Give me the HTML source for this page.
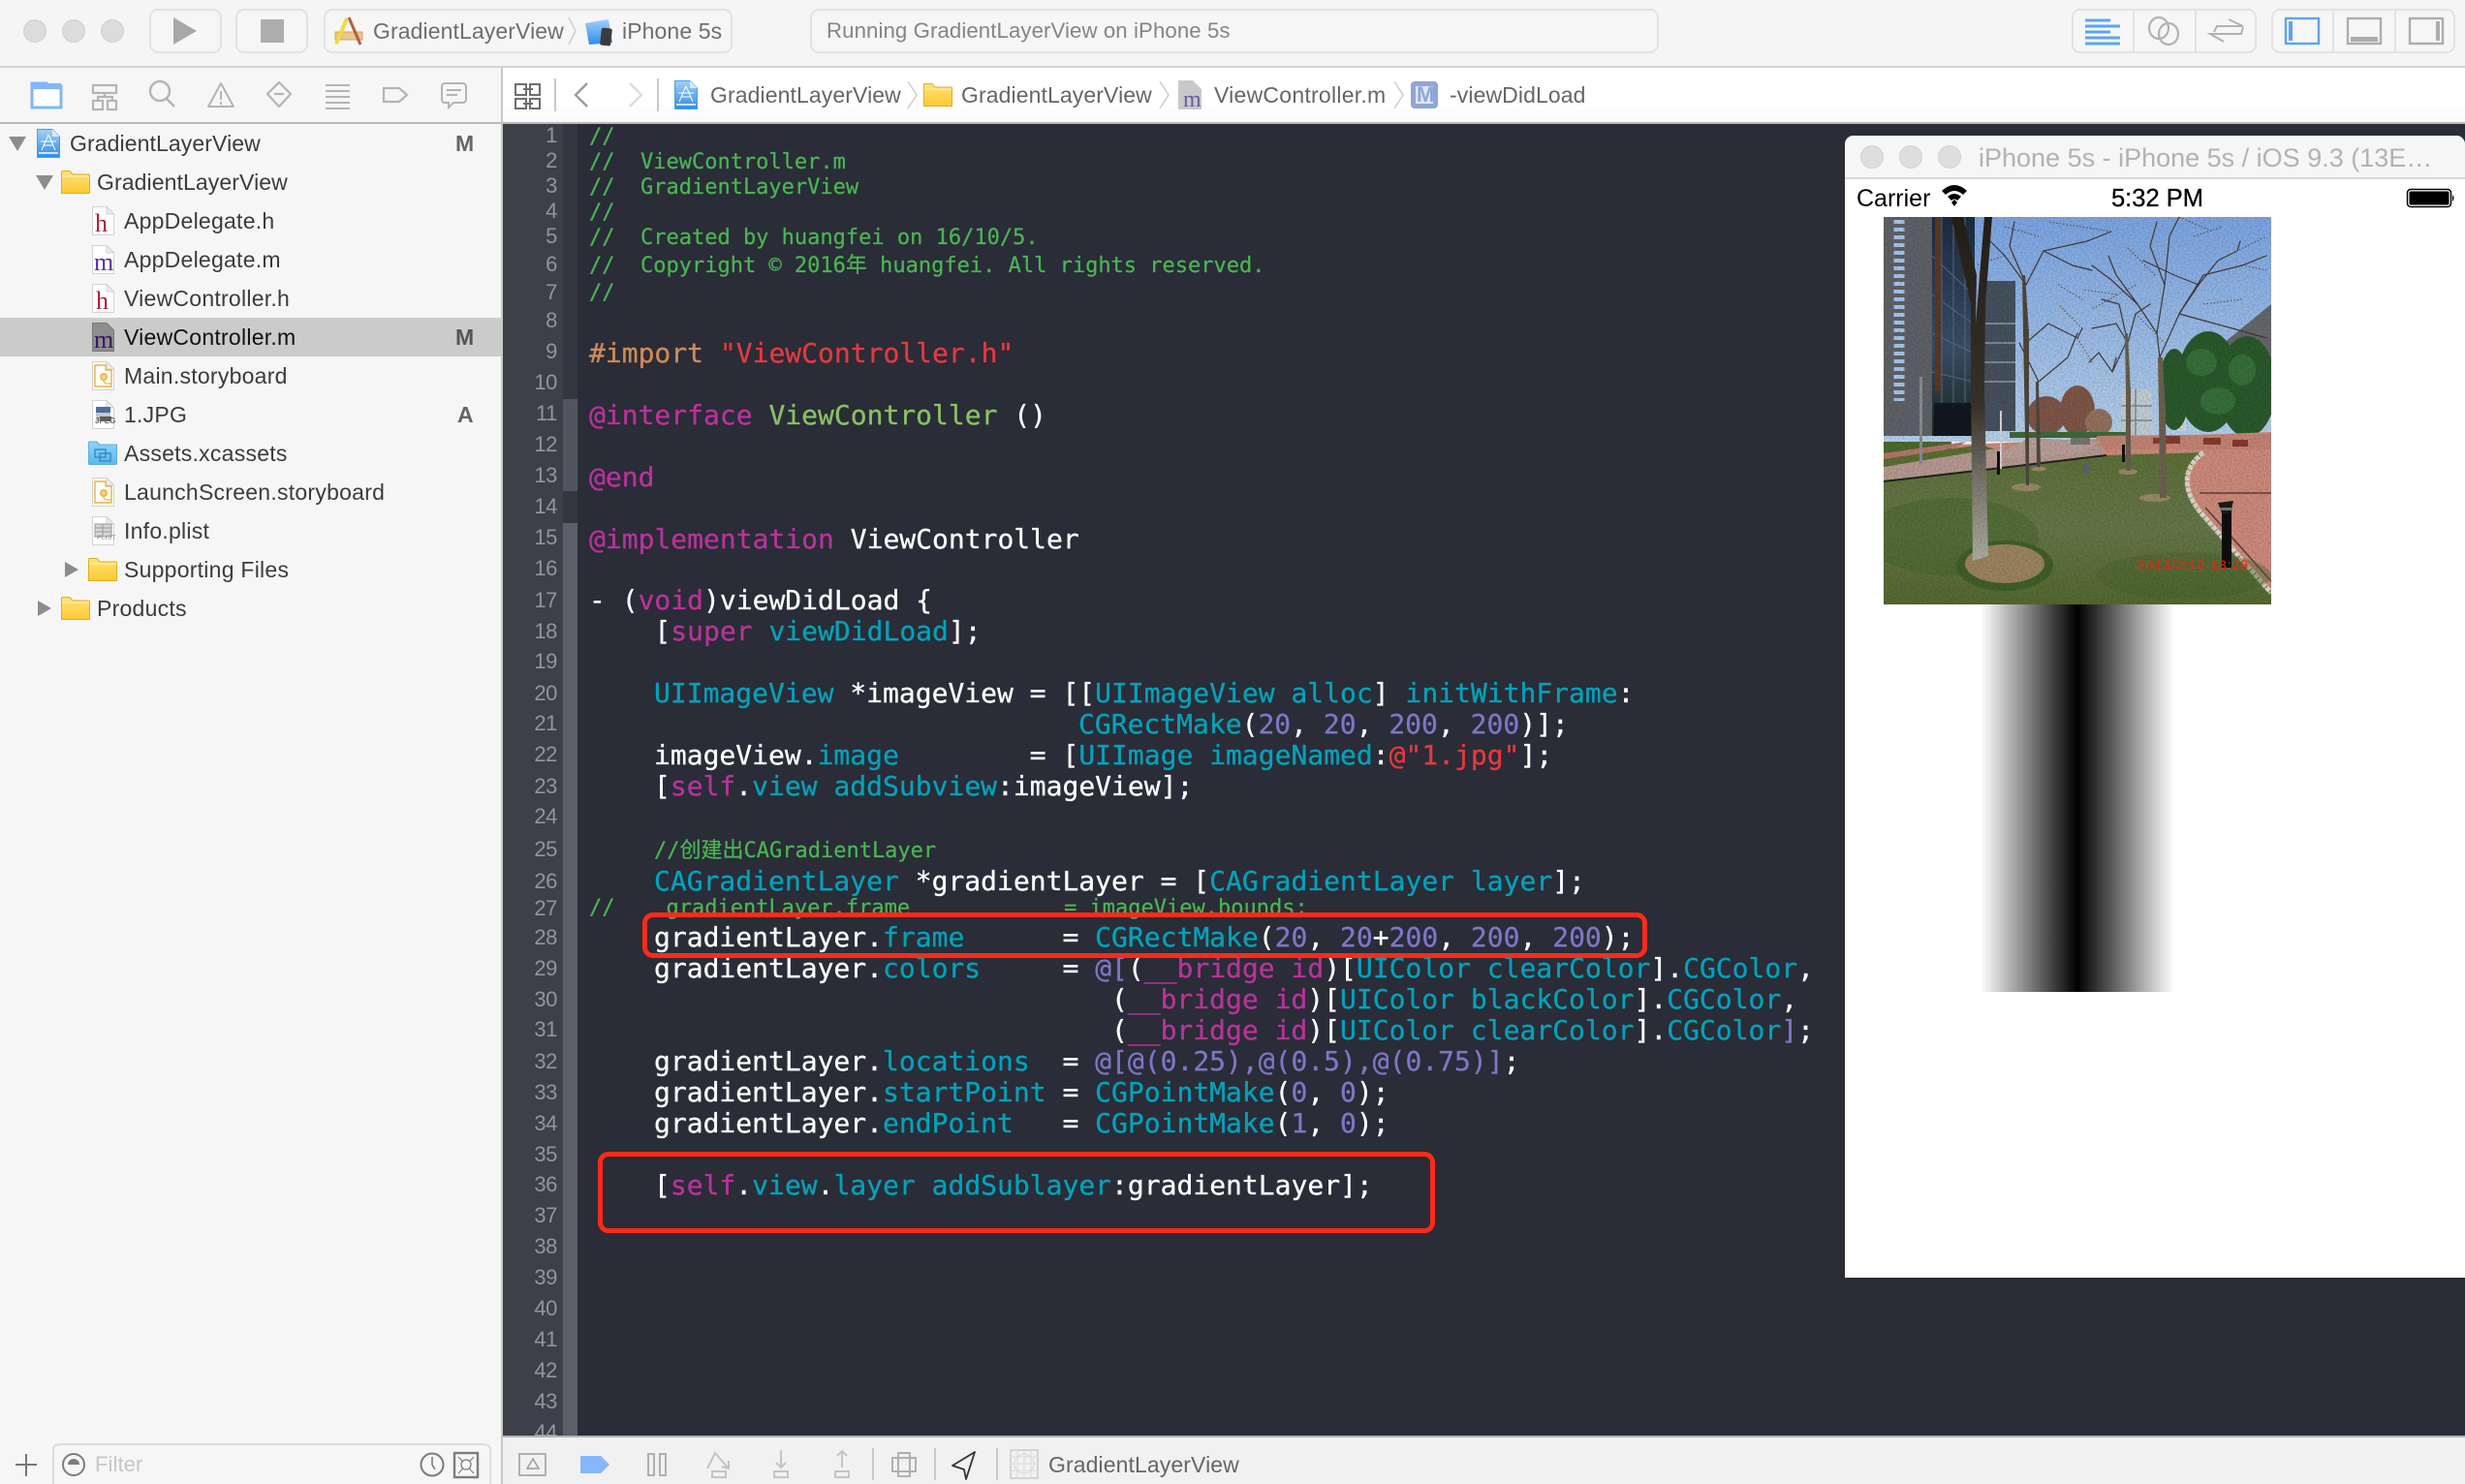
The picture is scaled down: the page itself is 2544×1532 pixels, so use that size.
<!DOCTYPE html>
<html><head><meta charset="utf-8"><title>Xcode</title>
<style>
html,body{margin:0;padding:0;width:2544px;height:1532px;overflow:hidden;background:#f6f6f6}
#p{position:absolute;left:0;top:0;width:2544px;height:1532px;overflow:hidden}
.a{position:absolute}
.t{position:absolute;font-family:"Liberation Sans",sans-serif;font-size:23px;line-height:30px;height:30px;white-space:pre;color:#3c3c3c;letter-spacing:.1px}
.f{letter-spacing:.25px}
.b{position:absolute;border:2px solid #e2e2e2;border-radius:9px;box-sizing:border-box;top:9px;height:46px;background:#f6f6f6}
.l{position:absolute;white-space:pre;font-family:"DejaVu Sans Mono","Noto Sans CJK SC",monospace;color:#fff;height:32px;line-height:32px;font-size:28px;-webkit-text-stroke:.3px}
.s{font-size:22px;color:#4ab554;-webkit-text-stroke:.25px}
.k{color:#b9339a}.c{color:#00a3bb}.n{color:#7f76c8}.r{color:#e5393f}.g{color:#8ac064}.o{color:#cf8a58}
.ln{position:absolute;left:0;width:56px;text-align:right;font-family:"Liberation Sans",sans-serif;font-size:22px;letter-spacing:-.4px;line-height:30px;height:30px;color:#92959b}
</style></head><body><div id="p">

<!-- backgrounds -->
<div class="a" style="left:0;top:0;width:2544px;height:69px;background:#f5f5f5"></div>
<div class="a" style="left:0;top:68px;width:2544px;height:2px;background:#d2d2d2"></div>
<div class="a" style="left:0;top:70px;width:517px;height:56px;background:#f6f6f6"></div>
<div class="a" style="left:519px;top:70px;width:2025px;height:56px;background:linear-gradient(#fff 60%,#fafafa)"></div>
<div class="a" style="left:0;top:126px;width:2544px;height:2px;background:#b9b9b9"></div>
<div class="a" style="left:517px;top:70px;width:2px;height:1462px;background:#c8c8c8"></div>
<div class="a" style="left:0;top:328px;width:517px;height:40px;background:#cbcbcb"></div>

<!-- editor -->
<div class="a" style="left:519px;top:128px;width:2025px;height:1354px;background:#2a2c37"></div>
<div class="a" style="left:519px;top:128px;width:62px;height:1354px;background:#3d4049"></div>
<div class="a" style="left:581px;top:128px;width:15px;height:1354px;background:#343641"></div>
<div class="a" style="left:581px;top:412px;width:15px;height:95px;background:#52555f"></div>
<div class="a" style="left:581px;top:540px;width:15px;height:942px;background:#5c5e69"></div>
<div class="a" style="left:519px;top:1482px;width:2025px;height:2px;background:#b4b4b4"></div>
<div class="a" style="left:519px;top:1484px;width:2025px;height:48px;background:#f1f1f1"></div>

<!-- toolbar buttons -->
<div class="b" style="left:154px;width:75px"></div>
<div class="b" style="left:243px;width:75px"></div>
<div class="b" style="left:334px;width:422px"></div>
<div class="b" style="left:836px;width:876px"></div>
<div class="b" style="left:2138px;width:191px"></div>
<div class="b" style="left:2344px;width:190px"></div>

<!-- chrome icons -->
<svg class="a" style="left:0;top:0" width="2544" height="1532" viewBox="0 0 2544 1532" fill="none">
<defs>
<linearGradient id="blu" x1="0" y1="0" x2="0" y2="1"><stop offset="0" stop-color="#9fd0fb"/><stop offset="1" stop-color="#2f8cec"/></linearGradient>
<linearGradient id="fol" x1="0" y1="0" x2="0" y2="1"><stop offset="0" stop-color="#ffe27a"/><stop offset="1" stop-color="#fdc92f"/></linearGradient>
<linearGradient id="fblu" x1="0" y1="0" x2="0" y2="1"><stop offset="0" stop-color="#8ed3fa"/><stop offset="1" stop-color="#5ab9f0"/></linearGradient>
<g id="doc"><path d="M.5.5H15L22.5 8V29.5H.5Z" fill="#fff" stroke="#d2d2d2"/><path d="M15 .5V8H22.5Z" fill="#eee" stroke="#d2d2d2"/></g>
<g id="folder"><path d="M.5 23.500V1.500Q.5.5 1.500.5H9L12 4H28.500Q29.500 4 29.500 5V23.500Z" fill="url(#fol)" stroke="#e0ac28"/><path d="M1 6H29" stroke="#fff3b8" stroke-width="1"/></g>
<g id="proj"><path d="M.5.5H16L23.500 8V29.500H.5Z" fill="url(#blu)" stroke="#4a9ee8"/><path d="M16 .5V8H23.500Z" fill="#d6ecfd"/><path d="M12 6L5 22M12 6L19 22M7 17H17M4 13H20" stroke="#fff" stroke-width="1"/><path d="M2 25H22" stroke="#fff" stroke-width="1.5"/></g>
<g id="story"><use href="#doc"/><path d="M3 4H14V9H20V26H3Z" stroke="#eeb23c" stroke-width="1.4"/><circle cx="12" cy="16" r="3.2" stroke="#eeb23c" stroke-width="1.6" fill="#f8d588"/><path d="M12 20Q12 24 20 23" stroke="#eeb23c" stroke-width="1.2"/></g>
</defs>

<!-- traffic lights -->
<g fill="#dcdcdc" stroke="#d0d0d0" stroke-width="1"><circle cx="36" cy="32" r="11.500"/><circle cx="76" cy="32" r="11.500"/><circle cx="116" cy="32" r="11.500"/></g>
<path d="M179 18L203 32L179 46Z" fill="#a8a8a8"/>
<rect x="269" y="20" width="24" height="24" fill="#adadad"/>

<!-- scheme icons -->
<path d="M346 33H374V41H346Z" fill="#e5c78b" stroke="#c9a868"/>
<path d="M360 18L372 46" stroke="#b85c44" stroke-width="3"/>
<path d="M358 19L347 45" stroke="#f3d93f" stroke-width="4"/>
<path d="M604 24L628 20L632 44L608 46Z" fill="url(#blu)"/>
<rect x="620" y="29" width="11" height="18" rx="2" fill="#3b3b3b" transform="rotate(6 625 38)"/>
<path d="M587 18L594 32L587 46" stroke="#cfcfcf" stroke-width="1.6"/>

<!-- right toolbar -->
<path d="M2202 10V54M2266 10V54M2408 10V54M2472 10V54" stroke="#e2e2e2" stroke-width="2"/>
<g stroke="#5aa4f8" stroke-width="3"><path d="M2152 21H2178M2152 27H2188M2152 33H2178M2152 39H2188M2152 45H2188"/></g>
<g stroke="#b2b2b2" stroke-width="2.2"><ellipse cx="2228" cy="29" rx="10" ry="11"/><ellipse cx="2238" cy="35" rx="10" ry="11"/></g>
<g stroke="#b2b2b2" stroke-width="2"><path d="M2285 33L2288 27H2315L2300 20"/><path d="M2315 28L2313 35H2281L2295 43"/></g>
<rect x="2359" y="19" width="34" height="26" stroke="#5aa4f8" stroke-width="2.4"/><rect x="2362" y="22" width="4" height="20" fill="#5aa4f8"/>
<rect x="2423" y="19" width="34" height="26" stroke="#adadad" stroke-width="2.4"/><rect x="2426" y="38" width="28" height="5" fill="#adadad"/>
<rect x="2487" y="19" width="34" height="26" stroke="#adadad" stroke-width="2.4"/><rect x="2514" y="22" width="4" height="20" fill="#adadad"/>

<!-- navigator tabs -->
<path d="M33 86H48L50 89H63V111H33Z" fill="#fff" stroke="#80b6fb" stroke-width="3"/><rect x="33" y="86" width="30" height="6" fill="#80b6fb"/>
<g stroke="#b4b4b4" stroke-width="2.2"><rect x="96" y="88" width="24" height="8"/><rect x="96" y="104" width="10" height="9"/><rect x="111" y="104" width="9" height="9"/><path d="M108 96V100M101 104V100H116V104"/></g>
<g stroke="#b4b4b4" stroke-width="2.4"><circle cx="165" cy="94" r="10"/><path d="M172 102L180 110"/></g>
<g stroke="#b4b4b4" stroke-width="2"><path d="M228 86L241 110H215Z" stroke-linejoin="round"/><path d="M228 94V103M228 105V108"/></g>
<g stroke="#b4b4b4" stroke-width="2.2"><path d="M288 85L300 97L288 110L276 97Z" stroke-linejoin="round"/><path d="M283 97H293"/></g>
<g stroke="#b4b4b4" stroke-width="2"><path d="M336 88H361M336 94H361M336 100H361M336 106H361M336 112H361"/></g>
<path d="M396 91H412L420 98L412 105H396Z" stroke="#b4b4b4" stroke-width="2.2"/>
<g stroke="#b4b4b4" stroke-width="2"><path d="M459 86H477Q481 86 481 90V102Q481 106 477 106H468L463 111V106H459Q456 106 456 102V90Q456 86 459 86Z"/><path d="M461 93H476M461 98H472"/></g>

<!-- jump bar -->
<g stroke="#6e6e6e" stroke-width="2"><rect x="532" y="87" width="11" height="11"/><rect x="547" y="87" width="10" height="11"/><rect x="532" y="102" width="11" height="10"/><rect x="547" y="102" width="10" height="10"/><path d="M540 92H550M540 107H550"/></g>
<path d="M573 81V115M679 81V115" stroke="#c8c8c8" stroke-width="2"/>
<path d="M606 86L594 98L606 110" stroke="#9c9c9c" stroke-width="2.4"/>
<path d="M650 86L662 98L650 110" stroke="#dcdcdc" stroke-width="2.4"/>
<use href="#proj" x="696" y="83"/>
<path d="M937 84L946 98L937 112M1197 84L1206 98L1197 112M1439 84L1448 98L1439 112" stroke="#cfcfcf" stroke-width="1.6"/>
<use href="#folder" x="953" y="86"/>
<path d="M1216 83H1231L1240 92V113H1216Z" fill="#c9c9c9"/>
<rect x="1456" y="84" width="28" height="28" rx="4" fill="#8ea6d8"/><rect x="1461" y="89" width="18" height="18" fill="#dfe6f6"/>

<!-- tree -->
<path d="M9 141H27L18 156Z" fill="#8c8c8c"/>
<path d="M37 181H55L46 196Z" fill="#8c8c8c"/>
<path d="M67 580V596L81 588Z" fill="#8c8c8c"/>
<path d="M39 620V636L53 628Z" fill="#8c8c8c"/>
<use href="#proj" x="38" y="133"/>
<use href="#folder" x="63" y="176"/>
<use href="#doc" x="95" y="213"/>
<use href="#doc" x="95" y="253"/>
<use href="#doc" x="95" y="293"/>
<path d="M95.500 333.500H110L117.500 341V362.500H95.500Z" fill="#8e8e8e" stroke="#777"/>
<use href="#story" x="95" y="373"/>
<use href="#doc" x="95" y="413"/>
<rect x="99" y="420" width="15" height="6" fill="#4b6f9e"/><rect x="99" y="426" width="15" height="9" fill="#c0c8d0"/><rect x="103" y="430" width="12" height="5" fill="#555"/>
<path d="M91.500 478V457Q91.500 456 92.500 456H100L103 459H120.500V478.500Q120.500 479.500 119.500 479.500H92.500Q91.500 479.500 91.500 478.500Z" fill="url(#fblu)" stroke="#5eaee0"/>
<rect x="98" y="464" width="11" height="8" stroke="#2f86c0" stroke-width="1.3"/><rect x="103" y="468" width="11" height="8" stroke="#2f86c0" stroke-width="1.3"/>
<use href="#story" x="95" y="493"/>
<use href="#doc" x="95" y="533"/>
<g stroke="#999" stroke-width="1"><rect x="98" y="541" width="17" height="13" fill="#d8d8d8"/><path d="M98 545H115M98 549H115M106 541V554"/></g>
<use href="#folder" x="91" y="576"/>
<use href="#folder" x="63" y="616"/>

<!-- filter bar -->
<path d="M27 1501V1524M16 1512H38" stroke="#777" stroke-width="2"/>
<path d="M55 1532V1497Q55 1491 62 1491H499Q506 1491 506 1497V1532" stroke="#dcdcdc" stroke-width="2" fill="#f6f6f6"/>
<circle cx="76" cy="1512" r="11" stroke="#7c7c7c" stroke-width="2"/><path d="M70 1512A6 6 0 0 1 82 1512Z" fill="#7c7c7c"/>
<circle cx="446" cy="1512" r="11.500" stroke="#7c7c7c" stroke-width="2"/><path d="M446 1504V1512L449 1517" stroke="#7c7c7c" stroke-width="1.6"/>
<rect x="469" y="1500" width="24" height="25" stroke="#7c7c7c" stroke-width="2.4"/><path d="M473 1504L489 1521M489 1504L473 1521" stroke="#7c7c7c" stroke-width="1.2"/><circle cx="481" cy="1512" r="5" stroke="#7c7c7c" stroke-width="1.3" fill="#f6f6f6"/>

<!-- debug bar -->
<rect x="536" y="1501" width="27" height="22" stroke="#b0b0b0" stroke-width="2"/><path d="M550 1506L556 1516H544Z" stroke="#9a9a9a" stroke-width="1.4"/>
<path d="M599 1503H620L629 1512L620 1521H599Z" fill="#85b7fa"/>
<path d="M669 1501H675V1523H669ZM681 1501H687V1523H681Z" stroke="#b0b0b0" stroke-width="2"/>
<g stroke="#c4c4c4" stroke-width="2"><path d="M730 1516L738 1500L752 1516M745 1514L752 1516L752 1508"/><rect x="735" y="1519" width="14" height="6"/>
<path d="M806 1497V1515M801 1510L806 1515L811 1510"/><rect x="799" y="1519" width="14" height="6"/>
<path d="M869 1515V1498M864 1503L869 1498L874 1503"/><rect x="862" y="1519" width="14" height="6"/></g>
<path d="M901 1495V1528M965 1495V1528M1029 1495V1528" stroke="#c0c0c0" stroke-width="1.6"/>
<g stroke="#b0b0b0" stroke-width="2"><rect x="927" y="1500" width="12" height="24"/><rect x="921" y="1505" width="24" height="14"/></g>
<path d="M1006 1499L983 1513L995 1517L997 1527Z" stroke="#333" stroke-width="1.8" stroke-linejoin="round"/>
<rect x="1043" y="1497" width="28" height="29" stroke="#c9c9c9" stroke-width="1.4"/>
<g stroke="#dadada" stroke-width="1"><circle cx="1057" cy="1511" r="10"/><path d="M1043 1504H1071M1043 1511H1071M1043 1518H1071M1050 1497V1526M1057 1497V1526M1064 1497V1526"/></g>
</svg>

<!-- toolbar text -->
<div class="t" style="left:385px;top:17px;color:#6e6e6e">GradientLayerView</div>
<div class="t" style="left:642px;top:17px;color:#6e6e6e">iPhone 5s</div>
<div class="t" style="left:853px;top:17px;color:#858585;font-size:22.2px">Running GradientLayerView on iPhone 5s</div>

<!-- jump bar text -->
<div class="t" style="left:733px;top:83px;color:#666">GradientLayerView</div>
<div class="t" style="left:992px;top:83px;color:#666">GradientLayerView</div>
<div class="t f" style="left:1253px;top:83px;color:#666">ViewController.m</div>
<div class="t" style="left:1496px;top:83px;color:#666">-viewDidLoad</div>
<div class="t" style="left:1221px;top:88px;color:#6a5a9e;font-family:'Liberation Serif',serif;font-size:24px">m</div>
<div class="t" style="left:1462px;top:83px;color:#8ea6d8;font-size:22px;font-weight:bold">M</div>

<!-- tree text -->
<div class="t" style="left:72px;top:133px">GradientLayerView</div>
<div class="t" style="left:100px;top:173px">GradientLayerView</div>
<div class="t f" style="left:128px;top:213px">AppDelegate.h</div>
<div class="t f" style="left:128px;top:253px">AppDelegate.m</div>
<div class="t f" style="left:128px;top:293px">ViewController.h</div>
<div class="t f" style="left:128px;top:333px;color:#111">ViewController.m</div>
<div class="t f" style="left:128px;top:373px">Main.storyboard</div>
<div class="t f" style="left:128px;top:413px">1.JPG</div>
<div class="t f" style="left:128px;top:453px">Assets.xcassets</div>
<div class="t f" style="left:128px;top:493px">LaunchScreen.storyboard</div>
<div class="t f" style="left:128px;top:533px">Info.plist</div>
<div class="t f" style="left:128px;top:573px">Supporting Files</div>
<div class="t f" style="left:100px;top:613px">Products</div>
<div class="t" style="left:470px;top:133px;font-weight:bold;color:#666;font-size:23px">M</div>
<div class="t" style="left:470px;top:333px;font-weight:bold;color:#555;font-size:23px">M</div>
<div class="t" style="left:472px;top:413px;font-weight:bold;color:#666;font-size:23px">A</div>
<div class="t" style="left:98px;top:216px;color:#a8233a;font-family:'Liberation Serif',serif;font-size:26px">h</div>
<div class="t" style="left:97px;top:256px;color:#5a2f9e;font-family:'Liberation Serif',serif;font-size:26px">m</div>
<div class="t" style="left:99px;top:296px;color:#a8233a;font-family:'Liberation Serif',serif;font-size:26px">h</div>
<div class="t" style="left:97px;top:336px;color:#34185e;font-family:'Liberation Serif',serif;font-size:26px">m</div>
<div class="t" style="left:98px;top:420px;color:#666;font-size:8px;letter-spacing:0;font-weight:bold;height:30px">JPEG</div>
<div class="t" style="left:100px;top:541px;color:#999;font-size:7px;letter-spacing:0;height:30px">PLIST</div>

<!-- filter / debug text -->
<div class="t" style="left:98px;top:1497px;color:#c6c6c6;font-size:22px">Filter</div>
<div class="t" style="left:1082px;top:1497px;color:#666">GradientLayerView</div>

<!-- gutter numbers -->
<div class="a" style="left:519px;top:128px;width:62px;height:1354px;overflow:hidden"><div class="a" style="left:0;top:-128px;width:62px;height:1532px">
<div class="ln" style="top:125px">1</div><div class="ln" style="top:151px">2</div><div class="ln" style="top:177px">3</div><div class="ln" style="top:203px">4</div><div class="ln" style="top:229px">5</div><div class="ln" style="top:258px">6</div><div class="ln" style="top:287px">7</div><div class="ln" style="top:316px">8</div><div class="ln" style="top:348px">9</div><div class="ln" style="top:380px">10</div><div class="ln" style="top:412px">11</div><div class="ln" style="top:444px">12</div><div class="ln" style="top:476px">13</div><div class="ln" style="top:508px">14</div><div class="ln" style="top:540px">15</div><div class="ln" style="top:572px">16</div><div class="ln" style="top:605px">17</div><div class="ln" style="top:637px">18</div><div class="ln" style="top:668px">19</div><div class="ln" style="top:701px">20</div><div class="ln" style="top:732px">21</div><div class="ln" style="top:764px">22</div><div class="ln" style="top:797px">23</div><div class="ln" style="top:828px">24</div><div class="ln" style="top:862px">25</div><div class="ln" style="top:895px">26</div><div class="ln" style="top:923px">27</div><div class="ln" style="top:953px">28</div><div class="ln" style="top:985px">29</div><div class="ln" style="top:1017px">30</div><div class="ln" style="top:1048px">31</div><div class="ln" style="top:1081px">32</div><div class="ln" style="top:1113px">33</div><div class="ln" style="top:1145px">34</div><div class="ln" style="top:1177px">35</div><div class="ln" style="top:1208px">36</div><div class="ln" style="top:1240px">37</div><div class="ln" style="top:1272px">38</div><div class="ln" style="top:1304px">39</div><div class="ln" style="top:1336px">40</div><div class="ln" style="top:1368px">41</div><div class="ln" style="top:1400px">42</div><div class="ln" style="top:1432px">43</div><div class="ln" style="top:1464px">44</div>
</div></div>

<!-- code -->
<div class="l s" style="left:608px;top:126px">//</div>
<div class="l s" style="left:608px;top:152px">//  ViewController.m</div>
<div class="l s" style="left:608px;top:178px">//  GradientLayerView</div>
<div class="l s" style="left:608px;top:204px">//</div>
<div class="l s" style="left:608px;top:230px">//  Created by huangfei on 16/10/5.</div>
<div class="l s" style="left:608px;top:259px">//  Copyright © 2016年 huangfei. All rights reserved.</div>
<div class="l s" style="left:608px;top:287px">//</div>
<div class="l" style="left:608px;top:349px"><span class="o">#import</span> <span class="r">"ViewController.h"</span></div>
<div class="l" style="left:608px;top:413px"><span class="k">@interface</span> <span class="g">ViewController</span> ()</div>
<div class="l" style="left:608px;top:477px"><span class="k">@end</span></div>
<div class="l" style="left:608px;top:541px"><span class="k">@implementation</span> ViewController</div>
<div class="l" style="left:608px;top:604px">- (<span class="k">void</span>)viewDidLoad {</div>
<div class="l" style="left:608px;top:636px">    [<span class="k">super</span> <span class="c">viewDidLoad</span>];</div>
<div class="l" style="left:675px;top:700px"><span class="c">UIImageView</span> *imageView = [[<span class="c">UIImageView</span> <span class="c">alloc</span>] <span class="c">initWithFrame</span>:</div>
<div class="l" style="left:1113px;top:732px"><span class="c">CGRectMake</span>(<span class="n">20</span>, <span class="n">20</span>, <span class="n">200</span>, <span class="n">200</span>)];</div>
<div class="l" style="left:675px;top:764px">imageView.<span class="c">image</span>        = [<span class="c">UIImage</span> <span class="c">imageNamed</span>:<span class="r">@"1.jpg"</span>];</div>
<div class="l" style="left:675px;top:796px">[<span class="k">self</span>.<span class="c">view</span> <span class="c">addSubview</span>:imageView];</div>
<div class="l s" style="left:675px;top:863px">//创建出CAGradientLayer</div>
<div class="l" style="left:675px;top:894px"><span class="c">CAGradientLayer</span> *gradientLayer = [<span class="c">CAGradientLayer</span> <span class="c">layer</span>];</div>
<div class="l s" style="left:608px;top:922px">//    gradientLayer.frame            = imageView.bounds;</div>
<div class="l" style="left:675px;top:952px">gradientLayer.<span class="c">frame</span>      = <span class="c">CGRectMake</span>(<span class="n">20</span>, <span class="n">20</span>+<span class="n">200</span>, <span class="n">200</span>, <span class="n">200</span>);</div>
<div class="l" style="left:675px;top:984px">gradientLayer.<span class="c">colors</span>     = <span class="n">@[</span>(<span class="k">__bridge id</span>)[<span class="c">UIColor</span> <span class="c">clearColor</span>].<span class="c">CGColor</span>,</div>
<div class="l" style="left:1147px;top:1016px">(<span class="k">__bridge id</span>)[<span class="c">UIColor</span> <span class="c">blackColor</span>].<span class="c">CGColor</span>,</div>
<div class="l" style="left:1147px;top:1048px">(<span class="k">__bridge id</span>)[<span class="c">UIColor</span> <span class="c">clearColor</span>].<span class="c">CGColor</span><span class="n">]</span>;</div>
<div class="l" style="left:675px;top:1080px">gradientLayer.<span class="c">locations</span>  = <span class="n">@[@(0.25),@(0.5),@(0.75)]</span>;</div>
<div class="l" style="left:675px;top:1112px">gradientLayer.<span class="c">startPoint</span> = <span class="c">CGPointMake</span>(<span class="n">0</span>, <span class="n">0</span>);</div>
<div class="l" style="left:675px;top:1144px">gradientLayer.<span class="c">endPoint</span>   = <span class="c">CGPointMake</span>(<span class="n">1</span>, <span class="n">0</span>);</div>
<div class="l" style="left:675px;top:1208px">[<span class="k">self</span>.<span class="c">view</span>.<span class="c">layer</span> <span class="c">addSublayer</span>:gradientLayer];</div>

<!-- red boxes -->
<div class="a" style="left:663px;top:942px;width:1037px;height:47px;border:5px solid #ff2a1a;border-radius:11px;box-sizing:border-box"></div>
<div class="a" style="left:617px;top:1189px;width:864px;height:84px;border:5px solid #ff2a1a;border-radius:11px;box-sizing:border-box"></div>

<!-- simulator -->
<div class="a" style="left:1904px;top:140px;width:640px;height:1179px;background:#fff;border-radius:9px 9px 0 0;overflow:hidden">
  <div class="a" style="left:0;top:0;width:640px;height:43px;background:#f6f6f6;border-bottom:2px solid #d8d8d8"></div>
  <svg class="a" style="left:0;top:0" width="640" height="100" fill="none">
    <g fill="#dedede" stroke="#d2d2d2"><circle cx="28" cy="22" r="11.500"/><circle cx="68" cy="22" r="11.500"/><circle cx="108" cy="22" r="11.500"/></g>
    <path d="M100 58Q113 46 126 58L122 62Q113 54 104 62ZM106 64Q113 58 120 64L116 68Q113 65 110 68ZM110 70L113 67L116 70L113 74Z" fill="#000" transform="translate(0 -1)"/>
    <rect x="580.500" y="55.500" width="45" height="18" rx="3.500" fill="#fff" stroke="#000" stroke-width="1.5"/><rect x="582.500" y="57.500" width="41" height="14" rx="1.500" fill="#000"/><path d="M627 61Q630 64.500 627 68Z" fill="#000"/>
  </svg>
  <div class="t" style="left:138px;top:8px;color:#b2b2b2;font-size:27px;letter-spacing:0">iPhone 5s - iPhone 5s / iOS 9.3 (13E…</div>
  <div class="t" style="left:12px;top:50px;color:#000;font-size:25px;letter-spacing:0">Carrier</div>
  <div class="t" style="left:275px;top:50px;color:#000;font-size:25.500px;letter-spacing:0;-webkit-text-stroke:.3px">5:32 PM</div>
  <!-- gradient -->
  <div class="a" style="left:40px;top:484px;width:400px;height:400px;background:linear-gradient(90deg,rgba(0,0,0,0) 25%,#000 50%,rgba(0,0,0,0) 75%)"></div>
</div>

<!-- photo -->
<svg class="a" style="left:1944px;top:224px" width="400" height="400" viewBox="0 0 400 400">
<defs>
<linearGradient id="sky" x1="0" y1="0" x2="0" y2="1"><stop offset="0" stop-color="#7ca6e4"/><stop offset="1" stop-color="#b8d2ec"/></linearGradient>
<linearGradient id="glass" x1="0" y1="0" x2="0" y2="1"><stop offset="0" stop-color="#1e2c40"/><stop offset=".6" stop-color="#3a5068"/><stop offset="1" stop-color="#1c2620"/></linearGradient>
<linearGradient id="trunk" x1="0" y1="0" x2="0" y2="1"><stop offset="0" stop-color="#251f1a"/><stop offset=".55" stop-color="#3a342c"/><stop offset=".75" stop-color="#77746a"/><stop offset="1" stop-color="#b0b0a6"/></linearGradient>
<linearGradient id="lawn" x1="0" y1="0" x2="0" y2="1"><stop offset="0" stop-color="#5d7138"/><stop offset=".5" stop-color="#66784a"/><stop offset="1" stop-color="#56692f"/></linearGradient>
<filter id="nz" x="0" y="0" width="100%" height="100%"><feTurbulence type="fractalNoise" baseFrequency=".55" numOctaves="2" seed="4"/><feColorMatrix values="0 0 0 0 0  0 0 0 0 0  0 0 0 0 0  1.6 0 0 0 -.55"/></filter>
</defs>
<rect width="400" height="232" fill="url(#sky)"/>
<!-- upper right building -->
<path d="M345 135L400 90V160H340Z" fill="#66686c"/>
<path d="M305 165L345 130L345 160Z" fill="#c9c8c0"/>
<rect x="300" y="150" width="12" height="70" fill="#d8d8cc"/>
<!-- distant -->
<rect x="100" y="66" width="36" height="155" fill="#46525e"/>
<path d="M100 110H136M100 130H136M100 150H136M100 170H136" stroke="#7d8c9a" stroke-width="2"/>
<rect x="0" y="0" width="50" height="226" fill="#5f6367"/>
<rect x="50" y="0" width="44" height="226" fill="url(#glass)"/>
<path d="M16 3V190" stroke="#a9c8ec" stroke-width="11" stroke-dasharray="4 4"/>
<path d="M50 40L92 80M50 80L92 110M50 120L92 140M50 160L92 170M60 0V220M72 0V220M84 0V220" stroke="#586c82" stroke-width="1"/>
<rect x="52" y="192" width="42" height="34" fill="#12181e"/>
<path d="M56 0L56 180" stroke="#5a3a28" stroke-width="6"/>
<!-- mid trees -->
<g fill="#7f5748"><ellipse cx="168" cy="205" rx="20" ry="20"/><ellipse cx="200" cy="200" rx="18" ry="26"/></g>
<ellipse cx="222" cy="212" rx="14" ry="14" fill="#96705f"/>
<rect x="245" y="178" width="32" height="48" fill="#c4ced6"/><path d="M245 195H277M245 210H277M260 178V226" stroke="#7b8d94" stroke-width="1.500"/>
<g fill="#2a5a2c"><ellipse cx="335" cy="170" rx="32" ry="52"/><ellipse cx="375" cy="175" rx="30" ry="52"/><ellipse cx="300" cy="178" rx="16" ry="42"/></g>
<g fill="#37703a"><ellipse cx="328" cy="150" rx="16" ry="14"/><ellipse cx="370" cy="158" rx="14" ry="16"/><ellipse cx="345" cy="190" rx="18" ry="14"/></g>
<rect x="130" y="222" width="120" height="6" fill="#3f6a3a"/>
<!-- ground -->
<path d="M0 238L400 222V400H0Z" fill="#cf8b7c"/>
<path d="M400 224V240H220L220 226Z" fill="#c48576"/>
<path d="M0 232H70V240L0 244Z" fill="#4c6a30"/>
<path d="M0 244L85 232L75 238L0 252Z" fill="#b7766c"/>
<path d="M0 250L100 235L130 245L0 265Z" fill="#5a7132"/>
<path d="M0 258L110 240L225 236L230 246L130 262L0 275Z" fill="#b89a92"/>
<path d="M150 228L225 232L200 245L110 250Z" fill="#bba09a"/>
<path d="M0 272L130 258L230 246L332 243Q296 268 325 303L400 385V400H0Z" fill="url(#lawn)"/>
<path d="M0 273L130 258L230 246" stroke="#222" stroke-width="2" fill="none"/>
<path d="M330 243Q298 268 327 305L400 388" stroke="#ddd8cc" stroke-width="5" fill="none" stroke-dasharray="5 1"/>
<path d="M332 300L400 376M326 285H400" stroke="#56453e" stroke-width="1.500" fill="none"/>
<ellipse cx="70" cy="330" rx="90" ry="40" fill="#48652c" opacity=".5"/>
<ellipse cx="310" cy="370" rx="90" ry="24" fill="#48652c" opacity=".4"/>
<!-- mounds -->
<ellipse cx="125" cy="360" rx="50" ry="26" fill="#41602a"/>
<ellipse cx="125" cy="358" rx="41" ry="20" fill="#9c8560"/>
<ellipse cx="280" cy="290" rx="16" ry="4" fill="#9a8a66"/>
<ellipse cx="147" cy="279" rx="15" ry="4" fill="#9a8a66"/>
<ellipse cx="252" cy="263" rx="10" ry="3" fill="#9a8a66"/>
<ellipse cx="160" cy="260" rx="8" ry="2.500" fill="#9a8a66"/>
<!-- planters -->
<g fill="#8a3a2e"><rect x="290" y="226" width="16" height="8"/><rect x="330" y="228" width="18" height="7"/><rect x="360" y="230" width="16" height="7"/><rect x="278" y="228" width="8" height="6"/></g>
<rect x="193" y="228" width="20" height="7" fill="#77786e"/>
<!-- branches -->
<g fill="none" stroke="#453a30" stroke-width="1.200" stroke-linecap="round">
<path d="M285 145L282 120L262 90L240 60L232 40"/><path d="M285 145L305 100L325 70L345 45"/><path d="M282 120L290 70L295 20L305 0"/><path d="M305 100L330 60L370 50L395 40"/><path d="M325 70L300 60L268 45"/><path d="M262 90L235 65L215 50"/><path d="M345 45L365 35L368 25"/><path d="M305 100L360 115L395 125"/><path d="M290 70L275 30L282 5"/>
<path d="M252 130L243 90L225 85M252 130L260 100L275 90M252 130L240 110L215 115"/>
<path d="M147 70L125 40L105 20M147 70L165 35L210 25L235 15M147 70L130 30L135 5M165 35L195 50L215 55"/>
<path d="M147 130L170 110L200 125L205 115M160 170L190 145L200 120M160 170L140 130"/>
<path d="M236 160L222 140L212 150M236 160L250 130M236 160L240 145"/>
</g>
<g fill="none" stroke="#5a4a3c" stroke-width="1" stroke-dasharray="1.500 2"><path d="M345 45L395 20M260 70L215 95M235 15L170 5M125 40L95 50M205 115L180 90M305 0L340 15M370 50L395 55M260 100L290 130M200 125L215 150M320 20L350 10M280 60L250 30M180 70L205 85M160 20L125 10M330 90L370 85M240 80L205 75"/></g>
<!-- trunks -->
<path d="M147 277L150 277L150 120L146 60L143 60L144 120Z" fill="#4f473b"/>
<path d="M285 290L292 290L291 200L288 145L283 145L284 200Z" fill="#6d6250"/>
<path d="M250 262L255 262L255 180L252 120L249 120L250 180Z" fill="#6a5f4e"/>
<path d="M158 258L162 258L161 210L160 170L157 170Z" fill="#514a3e"/>
<path d="M70 0L82 0L96 60L95 110L104 0L112 0L105 90L104 180L108 350L92 355L90 180L90 90Z" fill="url(#trunk)"/>
<rect x="37" y="165" width="3" height="90" fill="#8a8f90"/>
<rect x="120" y="200" width="2" height="60" fill="#d8d8d8"/>
<rect x="117" y="242" width="3" height="24" fill="#111"/>
<rect x="246" y="235" width="3" height="18" fill="#111"/>
<rect x="206" y="255" width="7" height="10" fill="#5a6668"/>
<!-- post -->
<rect x="349" y="300" width="10" height="62" fill="#0d0f0e"/>
<path d="M345 295L361 293L358 306H349Z" fill="#1a1c1a"/>
<rect x="347" y="300" width="13" height="3" fill="#777"/>
<rect width="400" height="400" filter="url(#nz)" opacity=".22"/>
<text x="262" y="364" font-family="Liberation Sans,sans-serif" font-size="14" fill="#ff1c10" textLength="114">2013/2/12  13:28</text>
</svg>

</div></body></html>
